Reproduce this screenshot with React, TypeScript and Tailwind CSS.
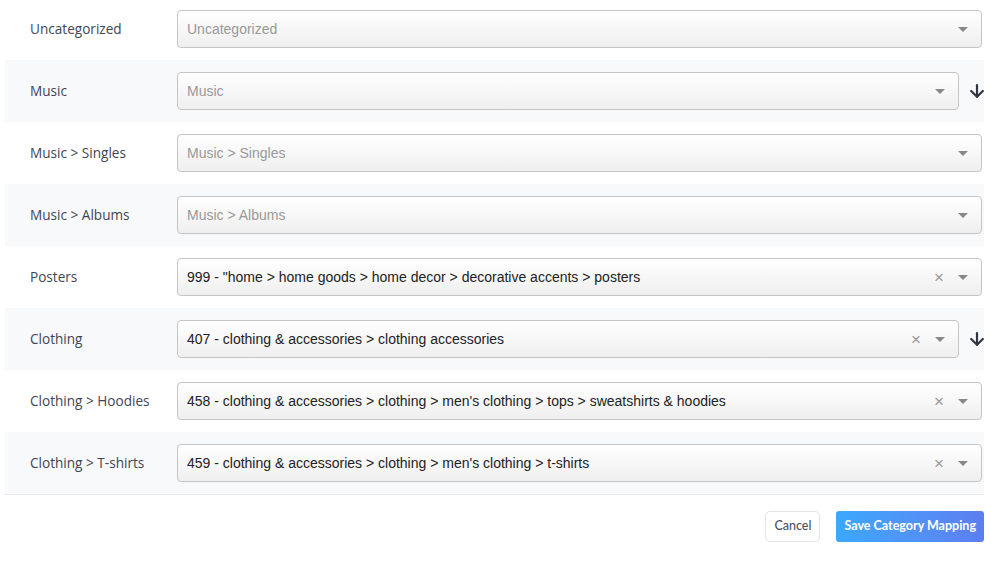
import { ArrowDown } from "lucide-react";

type Row = { label: string; value: string; placeholder?: boolean; arrow?: boolean };

const ROWS: Row[] = [
  { label: "Uncategorized", value: "Uncategorized", placeholder: true },
  { label: "Music", value: "Music", placeholder: true, arrow: true },
  { label: "Music > Singles", value: "Music > Singles", placeholder: true },
  { label: "Music > Albums", value: "Music > Albums", placeholder: true },
  { label: "Posters", value: '999 - "home > home goods > home decor > decorative accents > posters' },
  { label: "Clothing", value: "407 - clothing & accessories > clothing accessories", arrow: true },
  { label: "Clothing > Hoodies", value: "458 - clothing & accessories > clothing > men's clothing > tops > sweatshirts & hoodies" },
  { label: "Clothing > T-shirts", value: "459 - clothing & accessories > clothing > men's clothing > t-shirts" },
];

function Select({ row }: { row: Row }) {
  return (
    <div className="flex-1 h-[38px] flex items-center rounded-[4px] border border-[#c5c5c5] bg-gradient-to-b from-white to-[#efefef] pl-[9px] pr-[13px] font-['Liberation_Sans',Arial,sans-serif] text-[14px]">
      <span className={`flex-1 truncate ${row.placeholder ? "text-[#999]" : "text-[#222]"}`}>{row.value}</span>
      {!row.placeholder && <span className="text-[#999] text-[17px] leading-none mr-[14px]">×</span>}
      <span className="w-0 h-0 border-l-[5px] border-r-[5px] border-t-[5px] border-l-transparent border-r-transparent border-t-[#888]" />
    </div>
  );
}

export default function App() {
  return (
    <div className="w-[998px] h-[577px] bg-white font-['Open_Sans',sans-serif] overflow-hidden">
      <div className="-mt-[2px] ml-[5px] w-[979px] border-b border-[#e6e8eb]">
        {ROWS.map((row, i) => (
          <div key={row.label} className={`h-[62px] flex items-center pr-[2px] ${i % 2 ? "bg-[#f8f9fb]" : "bg-white"}`}>
            <div className="w-[172px] pl-[25px] pt-[1px] text-[13.6px] text-[#3f4652]">{row.label}</div>
            <Select row={row} />
            {row.arrow && (
              <div className="w-[28px] flex justify-end -mr-[5px]">
                <ArrowDown size={20} strokeWidth={2.6} className="text-[#2f3542]" />
              </div>
            )}
          </div>
        ))}
      </div>
      <div className="flex justify-end gap-[16px] mt-[16px] mr-[14px] font-['Lato',sans-serif]">
        <button className="h-[31px] px-[8px] rounded-[5px] border border-[#e2e4e8] bg-white text-[12.5px] font-medium text-[#4b5360]">Cancel</button>
        <button className="h-[31px] px-[8px] rounded-[3px] bg-gradient-to-r from-[#3aa8fd] to-[#5c7ef0] text-[12.5px] font-bold text-white">Save Category Mapping</button>
      </div>
    </div>
  );
}
